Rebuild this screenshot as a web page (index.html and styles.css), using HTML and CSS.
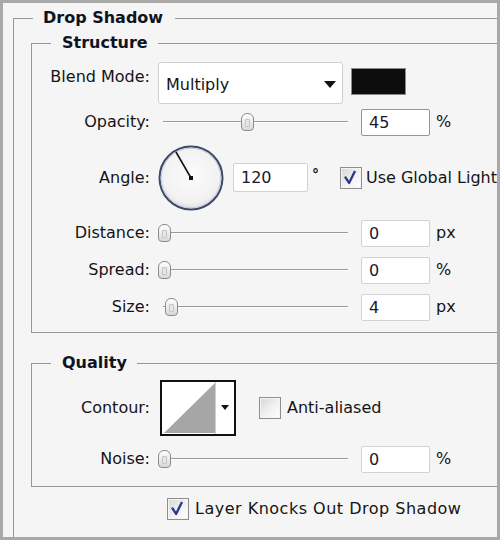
FILE: index.html
```html
<!DOCTYPE html>
<html>
<head>
<meta charset="utf-8">
<link rel="stylesheet" href="styles.css">
</head>
<body>
<div class="window">
  <fieldset class="group outer">
    <legend class="title title-outer">Drop Shadow</legend>

    <fieldset class="group sub structure">
      <legend class="title">Structure</legend>

      <div class="row row-blend">
        <span class="label label-top">Blend Mode:</span>
        <div class="select">
          <span class="select-text">Multiply</span>
          <span class="caret"></span>
        </div>
        <div class="swatch"></div>
      </div>

      <div class="row row-slider row-opacity">
        <span class="label">Opacity:</span>
        <div class="slider"><span class="thumb" style="--v:45"></span></div>
        <div class="field focus">45</div>
        <span class="unit">%</span>
      </div>

      <div class="row row-angle">
        <span class="label">Angle:</span>
        <svg class="dial" width="66" height="66" viewBox="0 0 66 66">
          <defs>
            <radialGradient id="dialFill" cx="50%" cy="45%" r="55%">
              <stop offset="0" stop-color="#fbfbfb"/>
              <stop offset="0.8" stop-color="#f2f2f2"/>
              <stop offset="1" stop-color="#dcdee4"/>
            </radialGradient>
          </defs>
          <circle cx="33" cy="33" r="31.5" fill="url(#dialFill)" stroke="#3c4868" stroke-width="2"/>
          <circle cx="33" cy="33" r="29.8" fill="none" stroke="#c6cad6" stroke-width="1"/>
          <line x1="33" y1="33" x2="18" y2="7" stroke="#151515" stroke-width="1.6"/>
          <rect x="31" y="31" width="4" height="4" fill="#111"/>
        </svg>
        <div class="field field-angle">120</div>
        <span class="degree">°</span>
        <span class="check checked">
          <svg width="22" height="22" viewBox="0 0 22 22"><path d="M5.5 10.5 L10 17.5 L16.5 4.5" fill="none" stroke="#2b3b8c" stroke-width="2.6" stroke-linejoin="round"/></svg>
        </span>
        <span class="check-label">Use Global Light</span>
      </div>

      <div class="row row-slider">
        <span class="label">Distance:</span>
        <div class="slider"><span class="thumb" style="--v:0"></span></div>
        <div class="field">0</div>
        <span class="unit">px</span>
      </div>

      <div class="row row-slider">
        <span class="label">Spread:</span>
        <div class="slider"><span class="thumb" style="--v:0"></span></div>
        <div class="field">0</div>
        <span class="unit">%</span>
      </div>

      <div class="row row-slider">
        <span class="label">Size:</span>
        <div class="slider"><span class="thumb" style="--v:4"></span></div>
        <div class="field">4</div>
        <span class="unit">px</span>
      </div>
    </fieldset>

    <fieldset class="group sub quality">
      <legend class="title">Quality</legend>

      <div class="row row-contour">
        <span class="label">Contour:</span>
        <svg class="contour" width="76" height="56" viewBox="0 0 76 56">
          <rect x="1" y="1" width="74" height="54" fill="#ffffff" stroke="#111" stroke-width="2"/>
          <polygon points="4,53 55,53 55,3" fill="#a6a6a6"/>
          <line x1="55.5" y1="2" x2="55.5" y2="54" stroke="#d0d0d0" stroke-width="1"/>
          <polygon points="61,25 69,25 65,30" fill="#111"/>
        </svg>
        <span class="check check-contour"></span>
        <span class="check-label">Anti-aliased</span>
      </div>

      <div class="row row-slider row-noise">
        <span class="label">Noise:</span>
        <div class="slider"><span class="thumb" style="--v:0"></span></div>
        <div class="field">0</div>
        <span class="unit">%</span>
      </div>
    </fieldset>

    <div class="row row-knock">
      <span class="check checked">
        <svg width="22" height="22" viewBox="0 0 22 22"><path d="M5.5 10.5 L10 17.5 L16.5 4.5" fill="none" stroke="#2b3b8c" stroke-width="2.6" stroke-linejoin="round"/></svg>
      </span>
      <span class="check-label">Layer Knocks Out Drop Shadow</span>
    </div>
  </fieldset>
</div>
</body>
</html>
```
FILE: styles.css
```css
html, body {
  margin: 0;
  padding: 0;
  background: #f5f5f5;
}

.window {
  width: 500px;
  height: 540px;
  box-sizing: border-box;
  border: 3px solid #a9a9a9;
  background: #f5f5f5;
  overflow: hidden;
  display: flex;
  flex-direction: column;
  font-family: "DejaVu Sans", Verdana, sans-serif;
  font-size: 16px;
  color: #141417;
}

.group {
  min-width: 0;
  border: 1px solid #969696;
  border-right: none;
}

.outer {
  flex: 1;
  margin: 5px 0 0 10px;
  padding: 5px 0 0 17px;
  border-bottom: none;
}

.sub {
  margin: 0;
  padding: 0;
}

.structure {
  padding: 9px 0 11px 0;
}

.quality {
  margin-top: 20px;
  padding: 7px 0 13px 0;
}

.title {
  font-weight: bold;
  line-height: 20px;
  color: #0e1422;
  padding: 0 10px 0 11px;
  margin-left: 19px;
}

.title-outer {
  margin-left: 2px;
  padding: 0 12px 0 10px;
}

.row {
  display: flex;
  align-items: center;
  line-height: 20px;
}

.label {
  width: 118px;
  flex: none;
  text-align: right;
  margin-right: 8px;
  white-space: nowrap;
}

/* Blend mode row */
.row-blend {
  height: 42px;
  align-items: flex-start;
}

.label-top {
  margin-top: 5px;
}

.select {
  width: 185px;
  height: 42px;
  box-sizing: border-box;
  background: #ffffff;
  border: 1px solid #cfcfcf;
  border-radius: 3px;
  display: flex;
  align-items: center;
  justify-content: space-between;
  padding: 3px 6px 0 7px;
}

.caret {
  width: 0;
  height: 0;
  border-left: 6px solid transparent;
  border-right: 6px solid transparent;
  border-top: 7px solid #111;
}

.swatch {
  width: 55px;
  height: 27px;
  box-sizing: border-box;
  margin: 6px 0 0 8px;
  background: #0d0d0d;
  border: 1px solid #8a8a8a;
}

/* Slider rows */
.row-slider {
  height: 28px;
  margin-top: 9px;
}

.row-opacity {
  margin-top: 4px;
}

.slider {
  position: relative;
  width: 190px;
  height: 28px;
  flex: none;
}

.slider::before {
  content: "";
  position: absolute;
  left: 5px;
  right: 0;
  top: 13px;
  height: 1px;
  background: #9b9b9b;
  box-shadow: 0 1px 0 #ffffff;
}

.thumb {
  position: absolute;
  top: 5px;
  left: calc(var(--v) * 1.84px);
  width: 13px;
  height: 18px;
  box-sizing: border-box;
  border: 1px solid #8c8c8c;
  border-radius: 6px 6px 4px 4px;
  background: linear-gradient(#ffffff, #d9d9d9);
}

.thumb::after {
  content: "";
  position: absolute;
  left: 3px;
  top: 5px;
  width: 5px;
  height: 8px;
  background: #e6e6e6;
  border: 1px solid #c4c4c4;
  box-sizing: border-box;
  border-radius: 1px;
}

.field {
  width: 69px;
  height: 27px;
  box-sizing: border-box;
  margin-left: 13px;
  padding: 3px 0 0 7px;
  background: #ffffff;
  border: 1px solid #d2d2d2;
  border-radius: 2px;
  color: #1a1a2c;
  flex: none;
}

.field.focus {
  border-color: #7a9cc4;
}

.unit {
  margin-left: 6px;
}

/* Angle row */
.row-angle {
  height: 65px;
  margin-top: 9px;
}

.dial {
  flex: none;
  display: block;
}

.field-angle {
  width: 75px;
  height: 29px;
  margin-left: 9px;
  padding-top: 4px;
}

.degree {
  margin: -8px 0 0 4px;
  width: 12px;
  font-weight: bold;
  font-size: 14px;
}

.check {
  width: 22px;
  height: 22px;
  box-sizing: border-box;
  flex: none;
  border: 1px solid #8d8e90;
  background: linear-gradient(135deg, #d6d6d8 0%, #f2f2f2 55%, #ffffff 100%);
  box-shadow: inset 0 0 0 1px #f4f4f4;
  display: flex;
  align-items: center;
  justify-content: center;
}

.check svg {
  display: block;
  position: relative;
  left: -1px;
  top: -1px;
}

.row-angle .check {
  margin-left: 16px;
}

.check-label {
  margin-left: 4px;
  white-space: nowrap;
}

/* Quality */
.row-contour {
  height: 56px;
}

.contour {
  display: block;
  flex: none;
  margin-left: 2px;
}

.check-contour {
  margin-left: 23px;
}

.row-contour .check-label {
  margin-left: 6px;
}

.row-knock {
  margin: 11px 0 0 136px;
  height: 22px;
}

.row-knock .check-label {
  margin-left: 6px;
  letter-spacing: 0.5px;
}
```
